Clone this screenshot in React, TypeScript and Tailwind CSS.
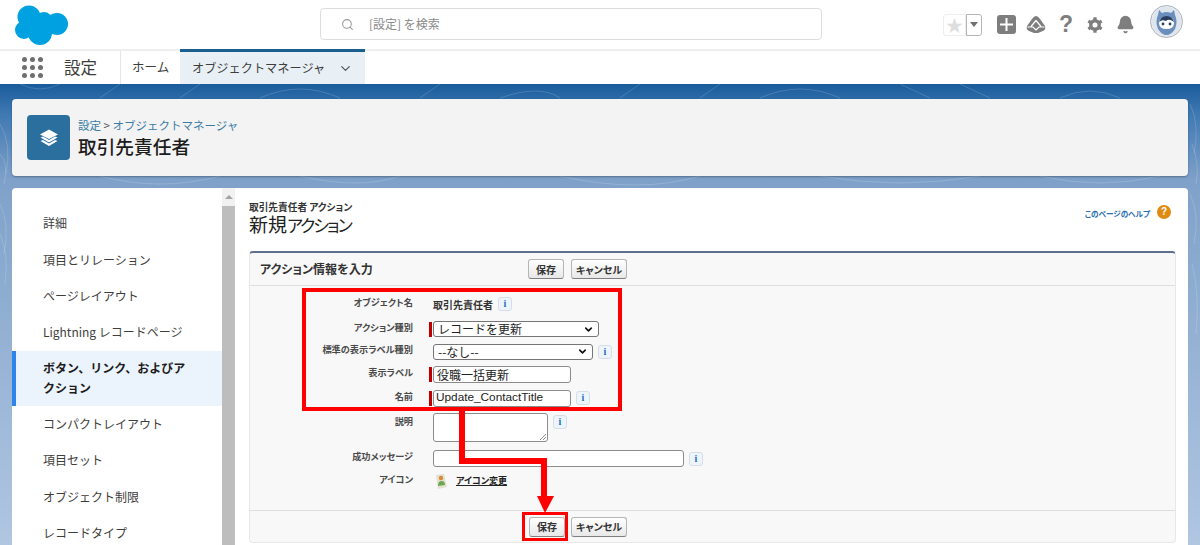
import { ChevronDown, Bell, Search } from "lucide-react";
import type { ReactNode } from "react";

const jp = "font-['Noto_Sans_CJK_JP','Noto_Sans',sans-serif]";

const sideItems = [
  "詳細",
  "項目とリレーション",
  "ページレイアウト",
  "Lightning レコードページ",
  "ボタン、リンク、およびアクション",
  "コンパクトレイアウト",
  "項目セット",
  "オブジェクト制限",
  "レコードタイプ",
];

const SalesforceLogo = () => (
  <svg width="54" height="40" viewBox="0 0 54 40" fill="#00a1e0">
    <circle cx="14" cy="12" r="11.5" />
    <circle cx="29" cy="15" r="8" />
    <circle cx="42" cy="19" r="11" />
    <circle cx="9" cy="25" r="9" />
    <circle cx="25" cy="28" r="12" />
    <circle cx="27" cy="21" r="11" />
  </svg>
);

const TrailheadIcon = () => (
  <svg width="20" height="20" viewBox="0 0 20 20">
    <path d="M10 1 Q12 1 14 4 L19 11 Q20 15 17 16 L12 18 L8 18 L3 16 Q0 15 1 11 L6 4 Q8 1 10 1 Z" fill="#7e7e7e" />
    <path d="M10 5.5 L15 11.5 M10 5.5 L5 11.5 M1.5 12 L7 12 L10 15 L13 12 L18.5 12" stroke="#fff" strokeWidth="1.2" fill="none" />
  </svg>
);

const GearIcon = () => (
  <svg width="18" height="18" viewBox="0 0 20 20">
    <path d="M10 1.5 V18.5 M2.6 5.7 L17.4 14.3 M2.6 14.3 L17.4 5.7" stroke="#7e7e7e" strokeWidth="3.6" />
    <circle cx="10" cy="10" r="6.6" fill="#7e7e7e" />
    <circle cx="10" cy="10" r="2.8" fill="#fff" />
  </svg>
);

const Avatar = () => (
  <div className="-mt-[6px] flex h-[33px] w-[33px] items-center justify-center rounded-full border border-[#aab2bd] bg-[#e9edf2]">
    <svg width="29" height="29" viewBox="0 0 29 29">
      <circle cx="14.5" cy="14.5" r="14.5" fill="#dfe5ec" />
      <path d="M6 8 L7 3 L10 6 Q14.5 4 19 6 L22 3 L23 8 Q26 14 23 22 Q19 28 14.5 28 Q10 28 6 22 Q3 14 6 8 Z" fill="#6b8fbd" />
      <path d="M7 16 Q7 10 14.5 10 Q22 10 22 16 Q22 22 14.5 22 Q7 22 7 16 Z" fill="#fff" />
      <path d="M7 15 Q9 9 14.5 9 Q20 9 22 15 Q17 11 14 14 Q10 12 7 15 Z" fill="#28405f" />
      <circle cx="11" cy="17" r="1.4" fill="#28405f" />
      <circle cx="18" cy="17" r="1.4" fill="#28405f" />
    </svg>
  </div>
);

const ContourLines = () => (
  <svg className="absolute inset-0 h-full w-full" viewBox="0 0 1200 461" fill="none" stroke="#ffffff" strokeOpacity="0.16">
    <path d="M20 0 Q40 10 60 0 M120 0 L100 14 M180 14 L200 0 M260 14 Q300 -4 340 14 M420 14 L440 0 M500 14 Q540 0 560 14 M640 0 L620 14 M700 14 L720 0 M760 14 Q800 -4 840 14 M900 0 L930 14 M960 0 L990 14 M1060 14 Q1090 0 1120 14" />
    <path d="M0 40 Q12 60 6 90 M0 70 Q9 80 4 100 M1190 20 Q1200 40 1194 70 M1192 60 Q1200 80 1196 100" />
    <path d="M100 92 Q160 108 220 92 M300 92 Q360 106 400 92 M560 92 Q640 110 700 92 M820 92 Q900 106 980 92 M1040 92 Q1100 106 1160 92" />
    <path d="M0 120 Q10 140 4 170 M0 150 Q9 170 5 200 M1190 110 Q1200 130 1194 160 M1192 180 Q1200 210 1196 250" />
  </svg>
);

const InfoButton = () => (
  <span className="ml-[5px] flex h-[14px] w-[14px] shrink-0 items-center justify-center rounded-[3px] border border-[#d5dde6] bg-[#eef4fb] font-['Liberation_Serif',serif] text-[10px] font-bold leading-none text-[#1f6fc4]">
    i
  </span>
);

const ClassicButton = ({ children, className }: { children: ReactNode; className: string }) => (
  <button className={`flex h-[20px] items-center justify-center rounded-[3px] border border-[#b5b5b5] border-b-[#7f7f7f] bg-[linear-gradient(#ffffff,#e8e8e8)] text-[10px] font-bold text-[#333] [font-feature-settings:'palt'] ${className}`}>
    {children}
  </button>
);

const SelectBox = ({ value, className }: { value: string; className: string }) => (
  <div className={`flex items-center justify-between rounded-[3px] border border-[#767676] bg-white pl-[4px] pr-[4px] text-[12px] leading-none text-[#222] ${className}`}>
    <span>{value}</span>
    <ChevronDown size={11} strokeWidth={3.5} color="#111" />
  </div>
);

const FormRow = ({
  label,
  height,
  required,
  top,
  children,
}: {
  label: string;
  height: string;
  required?: boolean;
  top?: boolean;
  children: ReactNode;
}) => (
  <div className={`flex ${height} ${top ? "items-start" : "items-center"}`}>
    <div className={`w-[163px] shrink-0 pb-[3px] text-right text-[9.2px] font-bold leading-none text-[#4a4a4a] [font-feature-settings:'palt'] ${top ? "pt-[10px]" : ""}`}>
      {label}
    </div>
    <div className={`ml-[16px] flex items-center ${required ? "" : "pl-[4px]"}`}>
      {required && <span className="mr-px h-[15px] w-[3px] bg-[#c00000]" />}
      {children}
    </div>
  </div>
);

const textBox = "rounded-[3px] border border-[#8c8c8c] bg-white";

export default function App() {
  return (
    <div className={`relative flex h-[545px] w-[1200px] flex-col overflow-hidden bg-white ${jp}`}>
      <header className="flex h-[49px] shrink-0 items-center bg-white">
        <div className="ml-[15px] w-[305px]">
          <SalesforceLogo />
        </div>
        <div className="-mt-px flex h-[32px] w-[502px] items-center rounded-[4px] border border-[#dddddd] pl-[20px] text-[12px] text-[#8a8a8a]">
          <Search size={13} color="#9a9a9a" />
          <span className="ml-[15px]">[設定] を検索</span>
        </div>
        <div className="ml-[121px] flex h-[22px] w-[39px]">
          <div className="flex w-[23px] items-center justify-center rounded-l-[3px] border border-[#eeeeee] text-[17px] leading-none text-[#dedede]">★</div>
          <div className="flex w-[16px] items-center justify-center rounded-r-[3px] border border-[#b5b5b5]">
            <span className="h-0 w-0 border-x-[4px] border-t-[5px] border-x-transparent border-t-[#707070]" />
          </div>
        </div>
        <div className="ml-[15px] flex h-[19px] w-[19px] items-center justify-center rounded-[3px] bg-[#7e7e7e]">
          <svg width="13" height="13" viewBox="0 0 13 13" stroke="#fff" strokeWidth="2">
            <path d="M6.5 0 V13 M0 6.5 H13" />
          </svg>
        </div>
        <div className="ml-[10px]">
          <TrailheadIcon />
        </div>
        <div className="ml-[10px] flex w-[20px] justify-center">
          <span className="font-['Liberation_Sans',sans-serif] text-[23px] font-bold leading-none text-[#7e7e7e]">?</span>
        </div>
        <div className="ml-[10px]">
          <GearIcon />
        </div>
        <div className="ml-[12px]">
          <Bell size={19} color="#7e7e7e" fill="#7e7e7e" />
        </div>
        <div className="ml-[15px]">
          <Avatar />
        </div>
      </header>

      <nav className="flex h-[35px] shrink-0 items-stretch border-t-2 border-[#eeeeee] bg-white">
        <div className="flex w-[121px] items-center border-r border-[#e6e6e6] pl-[22px]">
          <div className="grid grid-cols-3 gap-[3px]">
            {Array.from({ length: 9 }).map((_, i) => (
              <span key={i} className="h-[5px] w-[5px] rounded-full bg-[#6f6f6f]" />
            ))}
          </div>
          <span className="ml-[21px] text-[16.5px] leading-none text-[#3e3e3c]">設定</span>
        </div>
        <div className="flex w-[59px] items-center pl-[11px] text-[12.5px] text-[#3e3e3c]">ホーム</div>
        <div className="-mt-[2px] flex w-[185px] items-center border-t-[3px] border-[#1b5f8f] bg-[#e8f0f6] pl-[12px] text-[12.2px] text-[#3e3e3c]">
          オブジェクトマネージャ
          <ChevronDown size={15} color="#555" className="ml-[13px]" />
        </div>
      </nav>

      <main className="relative flex min-h-0 flex-1 flex-col bg-[linear-gradient(#1a5c9c_0,#3f79b2_30px,#7fa1c9_96px,#b0c6e1_460px)] px-[12px] pt-[15px]">
        <ContourLines />
        <section className="relative flex h-[77px] shrink-0 items-center rounded-[4px] bg-[#f3f3f3] pl-[15px] shadow-[0_1px_2px_rgba(0,0,0,0.3)]">
          <div className="flex h-[45px] w-[43px] items-center justify-center rounded-[4px] bg-[#2a6f9e]">
            <svg width="20" height="20" viewBox="0 0 20 20" fill="#fff">
              <path d="M10 1.5 L19 6.5 L10 11 L1 6.5 Z" />
              <path d="M1.5 9.5 L4 8.5 L10 12 L16 8.5 L18.5 9.5 L10 14.5 Z" />
              <path d="M1.5 13 L4 12 L10 15.5 L16 12 L18.5 13 L10 18 Z" />
            </svg>
          </div>
          <div className="ml-[8px]">
            <div className="text-[11.5px] leading-[16px] text-[#3a7ca5]">
              設定 <span className="text-[#555]">&gt;</span> オブジェクトマネージャ
            </div>
            <div className="mt-[1px] text-[18.7px] font-medium leading-[24px] text-[#1c1c1c]">取引先責任者</div>
          </div>
        </section>

        <section className="relative mt-[12px] flex min-h-0 flex-1 rounded-t-[4px] bg-white">
          <aside className="w-[210px] shrink-0 pt-[17px]">
            {sideItems.map((item) =>
              item.startsWith("ボタン") ? (
                <div key={item} className="flex h-[55px] items-center border-l-4 border-[#2e84ea] bg-[#ebf3fc] pl-[27px] pr-[30px] text-[12px] font-bold leading-[20px] text-[#1c1c1c]">
                  {item}
                </div>
              ) : (
                <div key={item} className="flex h-[36.4px] items-center pl-[31px] text-[12px] text-[#3e3e3c]">
                  {item}
                </div>
              ),
            )}
          </aside>
          <div className="flex w-[13px] shrink-0 flex-col bg-[#f1f1f1]">
            <div className="flex h-[18px] items-center justify-center">
              <span className="h-0 w-0 border-x-[4px] border-b-[4px] border-x-transparent border-b-[#a3a3a3]" />
            </div>
            <div className="flex-1 bg-[#bdbdbd]" />
          </div>
          <div className="ml-[14px] mr-[12px] flex min-w-0 flex-1 flex-col pt-[14px]">
            <div className="flex items-start justify-between">
              <div className="[font-feature-settings:'palt']">
                <div className="text-[9.7px] font-bold leading-[11px] text-[#333]">取引先責任者 アクション</div>
                <div className="text-[19px] leading-[22px] text-[#222]">
                  新規<span className="text-[17px] tracking-[-2px]">アクション</span>
                </div>
              </div>
              <div className="flex items-center pr-[5px] pt-[3px]">
                <span className="mt-[3px] text-[7.6px] font-bold text-[#2a6fb0] [font-feature-settings:'palt']">このページのヘルプ</span>
                <span className="ml-[7px] flex h-[14px] w-[14px] items-center justify-center rounded-full bg-[#e08a10] font-['Liberation_Sans',sans-serif] text-[10px] font-bold leading-none text-white">?</span>
              </div>
            </div>

            <div className="mt-[15px] flex h-[292px] shrink-0 flex-col rounded-[4px] border border-t-[2px] border-[#e8e8e8] border-t-[#5f6f8f] bg-[#f8f8f8]">
              <div className="flex h-[33px] shrink-0 items-center border-b border-[#dedede] pl-[10px]">
                <span className="w-[268px] text-[12px] font-bold text-[#333] [font-feature-settings:'palt']">アクション情報を入力</span>
                <ClassicButton className="w-[36px]">保存</ClassicButton>
                <ClassicButton className="ml-[7px] w-[56px]">キャンセル</ClassicButton>
              </div>
              <div className="flex flex-1 flex-col pt-[7px]">
                <FormRow label="オブジェクト名" height="h-[22px]">
                  <span className="text-[10px] font-bold text-[#333] [font-feature-settings:'palt']">取引先責任者</span>
                  <InfoButton />
                </FormRow>
                <FormRow label="アクション種別" height="h-[28px]" required>
                  <SelectBox value="レコードを更新" className="h-[16px] w-[166px]" />
                </FormRow>
                <FormRow label="標準の表示ラベル種別" height="h-[17px]">
                  <SelectBox value="--なし--" className="h-[16px] w-[160px]" />
                  <InfoButton />
                </FormRow>
                <FormRow label="表示ラベル" height="h-[29px]" required>
                  <div className={`flex h-[17px] w-[138px] items-center pl-[3px] text-[12px] text-[#222] ${textBox}`}>役職一括更新</div>
                </FormRow>
                <FormRow label="名前" height="h-[18px]" required>
                  <div className={`flex h-[17px] w-[138px] items-center pl-[2px] font-['Liberation_Sans',sans-serif] text-[11.8px] text-[#222] ${textBox}`}>Update_ContactTitle</div>
                  <InfoButton />
                </FormRow>
                <FormRow label="説明" height="h-[41px]" top>
                  <div className={`relative mt-[6px] h-[29px] w-[115px] ${textBox}`}>
                    <svg className="absolute bottom-0 right-0" width="8" height="8" viewBox="0 0 8 8" stroke="#8c8c8c">
                      <path d="M1 7 L7 1 M4 7 L7 4" />
                    </svg>
                  </div>
                  <span className="-mt-[6px]">
                    <InfoButton />
                  </span>
                </FormRow>
                <FormRow label="成功メッセージ" height="h-[21px]">
                  <div className={`h-[17px] w-[251px] ${textBox}`} />
                  <InfoButton />
                </FormRow>
                <FormRow label="アイコン" height="h-[24px]">
                  <svg width="13" height="17" viewBox="0 0 13 17" className="ml-[2px]">
                    <path d="M1 2 L9 1 L12 14 L3 16 Z" fill="#e3e0d0" />
                    <circle cx="6" cy="5" r="2.2" fill="#d98b3a" />
                    <path d="M3 13 Q3 8 6.5 8 Q10 8 10 12 Z" fill="#6aa84f" />
                  </svg>
                  <span className="ml-[8px] text-[9px] font-bold text-[#222] underline [font-feature-settings:'palt']">アイコン変更</span>
                </FormRow>
              </div>
              <div className="flex h-[32px] shrink-0 items-center border-t border-[#dedede] pl-[279px]">
                <ClassicButton className="w-[36px]">保存</ClassicButton>
                <ClassicButton className="ml-[6px] w-[56px]">キャンセル</ClassicButton>
              </div>
            </div>
          </div>
        </section>
      </main>

      {/* red annotations over the form */}
      <div className="absolute left-[302px] top-[288px] h-[123px] w-[320px] border-4 border-[#ff0000]" />
      <svg className="absolute left-0 top-0" width="1200" height="545" fill="#ff0000">
        <path d="M459 410 H465 V458 H547 V496 H554 L545 513 L537 496 H541 V464 H459 Z" />
      </svg>
      <div className="absolute left-[522px] top-[512px] h-[29px] w-[46px] border-[3px] border-[#ff0000]" />
    </div>
  );
}
